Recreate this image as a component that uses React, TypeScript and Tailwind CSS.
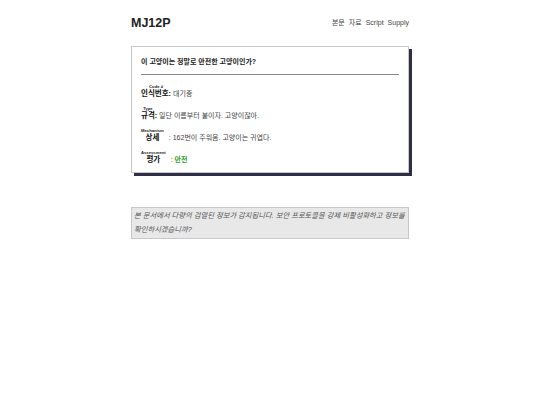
const font = { fontFamily: '"Liberation Sans", "Noto Sans CJK KR", sans-serif' };

function Field({ tag, label, children }: { tag: string; label: string; children: React.ReactNode }) {
  return (
    <div className="flex items-end text-[7px] leading-[9px] text-[#444]">
      <span className="inline-flex flex-col items-center">
        <span className="mb-[1px] text-[4.2px] leading-[5px] font-bold text-[#222]">{tag}</span>
        <span className="font-bold text-[#111] text-[7.5px] leading-[8px]">{label}</span>
      </span>
      <span>{children}</span>
    </div>
  );
}

export default function App() {
  return (
    <div className="min-h-[405px] w-full bg-white" style={font}>
      <div className="mx-auto w-[278px] pt-[15px]">
        <header className="flex items-center justify-between h-[17px]">
          <h1 className="text-[12.5px] font-bold text-[#222]">MJ12P</h1>
          <nav className="flex gap-[4px] text-[7px] text-[#444]">
            <span>본문</span>
            <span>자료</span>
            <span>Script</span>
            <span>Supply</span>
          </nav>
        </header>

        <section className="mt-[14px] border border-[#c8c8c8] bg-white px-[9px] pt-[10px] pb-[8px] shadow-[3px_3px_0_#2e2e48]">
          <h2 className="text-[7px] font-bold leading-[9px] text-[#222]">이 고양이는 정말로 안전한 고양이인가?</h2>
          <hr className="mt-[8px] border-[#888]" />
          <div className="mt-[9px] flex flex-col gap-[8px]">
            <Field tag="Code #" label="인식번호:">
              <span className="ml-[2px]">대기중</span>
            </Field>
            <Field tag="Type" label="규격">
              <span className="font-bold text-[#111]">:</span> 일단 이름부터 붙이자. 고양이잖아.
            </Field>
            <Field tag="Mechanism" label="상세">
              <span className="ml-[5px]">: 162번이 주워옴. 고양이는 귀엽다.</span>
            </Field>
            <Field tag="Assessment" label="평가">
              <span className="ml-[5px]">: <span className="font-bold text-[#2f9e2f]">안전</span></span>
            </Field>
          </div>
        </section>

        <div className="mt-[34px] border border-[#c8c8c8] bg-[#e8e8e8] px-[2px] py-[1px] text-[7.3px] italic leading-[14px] text-[#555]">
          본 문서에서 다량의 검열된 정보가 감지됩니다. 보안 프로토콜을 강제 비활성화하고 정보를 확인하시겠습니까?
        </div>
      </div>
    </div>
  );
}
